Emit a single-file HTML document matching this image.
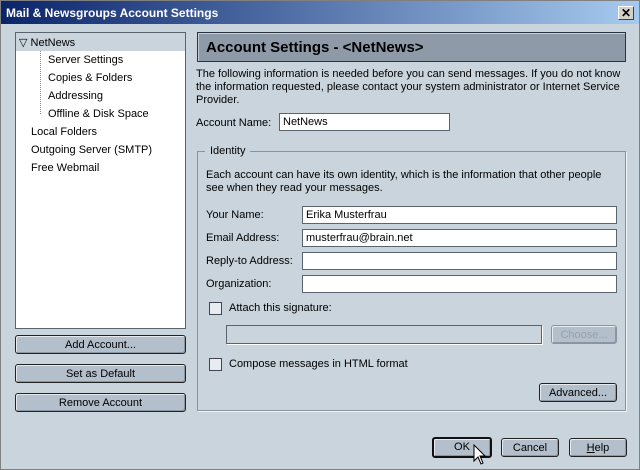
<!DOCTYPE html><html><head><style>
*{margin:0;padding:0;box-sizing:border-box}
body{width:640px;height:470px;background:#c9d4dc;font-family:"Liberation Sans",sans-serif;font-size:11px;color:#000;position:relative;overflow:hidden;border:1px solid #808080}
.a{position:absolute;white-space:nowrap}
.title{left:0;top:0;width:638px;height:23px;background:linear-gradient(90deg,#0a246a,#a6caef);color:#fff;font-weight:bold;font-size:12px;padding:5px 5px}
.x{left:617px;top:5px;width:16px;height:14px;background:#d4d0c8;border:1px solid;border-color:#fff #404040 #404040 #fff;font-size:12px;font-weight:bold;text-align:center;line-height:12px}
.btn{position:absolute;background:#b4bfcc;border:1px solid #222;border-radius:3px;text-align:center;line-height:18px;box-shadow:inset 1px 1px 0 #e4eaf0,inset -1px -1px 0 #8a96a4}
.in{position:absolute;background:#fff;border:1px solid #5a6470;height:18px;padding:2px 3px;line-height:12px}
.cb{position:absolute;width:13px;height:13px;border:1px solid #445;background:#e6ecf0}
</style></head><body>
<div class="a title">Mail &amp; Newsgroups Account Settings</div>
<div class="a x">✕</div>
<div class="a" style="left:14px;top:31px;width:171px;height:297px;background:#fff;border:1px solid #5a6470"></div>
<div class="a" style="left:15px;top:32px;width:169px;height:18px;background:#c9d4dc"></div>
<div class="a" style="left:18px;top:35px">▽ NetNews</div>
<div class="a" style="left:39px;top:50px;width:1px;height:63px;border-left:1px dotted #888"></div>
<div class="a" style="left:47px;top:53px">Server Settings</div>
<div class="a" style="left:47px;top:71px">Copies &amp; Folders</div>
<div class="a" style="left:47px;top:89px">Addressing</div>
<div class="a" style="left:47px;top:107px">Offline &amp; Disk Space</div>
<div class="a" style="left:30px;top:125px">Local Folders</div>
<div class="a" style="left:30px;top:143px">Outgoing Server (SMTP)</div>
<div class="a" style="left:30px;top:161px">Free Webmail</div>
<div class="btn" style="left:14px;top:334px;width:171px;height:19px">Add Account...</div>
<div class="btn" style="left:14px;top:363px;width:171px;height:19px">Set as Default</div>
<div class="btn" style="left:14px;top:392px;width:171px;height:19px">Remove Account</div>
<div class="a" style="left:196px;top:31px;width:429px;height:30px;background:#8e9aa8;border:1px solid #2a3440;box-shadow:inset 1px 1px 0 #c4ccd4;font-size:15px;font-weight:bold;padding:6px 8px">Account Settings - &lt;NetNews&gt;</div>
<div class="a" style="left:195px;top:67px;line-height:13px">The following information is needed before you can send messages. If you do not know<br>the information requested, please contact your system administrator or Internet Service<br>Provider.</div>
<div class="a" style="left:195px;top:116px">Account Name:</div>
<div class="in" style="left:278px;top:112px;width:171px">NetNews</div>
<div class="a" style="left:196px;top:150px;width:429px;height:260px;border:1px solid #8a949e;box-shadow:1px 1px 0 #f0f4f6"></div>
<div class="a" style="left:204px;top:144px;background:#c9d4dc;padding:0 5px">Identity</div>
<div class="a" style="left:205px;top:168px;line-height:13px">Each account can have its own identity, which is the information that other people<br>see when they read your messages.</div>
<div class="a" style="left:205px;top:208px">Your Name:</div>
<div class="in" style="left:301px;top:205px;width:315px">Erika Musterfrau</div>
<div class="a" style="left:205px;top:231px">Email Address:</div>
<div class="in" style="left:301px;top:228px;width:315px">musterfrau@brain.net</div>
<div class="a" style="left:205px;top:254px">Reply-to Address:</div>
<div class="in" style="left:301px;top:251px;width:315px"></div>
<div class="a" style="left:205px;top:277px">Organization:</div>
<div class="in" style="left:301px;top:274px;width:315px"></div>
<div class="cb" style="left:208px;top:301px"></div>
<div class="a" style="left:228px;top:301px">Attach this signature:</div>
<div class="a" style="left:225px;top:324px;width:316px;height:19px;border:1px solid #5a6470;background:#c9d4dc;box-shadow:1px 1px 0 #fff"></div>
<div class="btn" style="left:550px;top:324px;width:66px;height:19px;color:#98a2ac;border-color:#8a949e">Choose...</div>
<div class="cb" style="left:208px;top:357px"></div>
<div class="a" style="left:228px;top:357px">Compose messages in HTML format</div>
<div class="btn" style="left:538px;top:382px;width:78px;height:19px">Advanced...</div>
<div class="btn" style="left:431px;top:436px;width:60px;height:21px;border:2px solid #111;line-height:17px">OK</div>
<div class="btn" style="left:500px;top:437px;width:58px;height:19px">Cancel</div>
<div class="btn" style="left:568px;top:437px;width:58px;height:19px"><u>H</u>elp</div>
<svg class="a" style="left:472px;top:443px" width="14" height="22" viewBox="0 0 14 22"><path d="M1 1V17L5 13L8 20L10 19L7 12H12Z" fill="#fff" stroke="#000"/></svg>
</body></html>
